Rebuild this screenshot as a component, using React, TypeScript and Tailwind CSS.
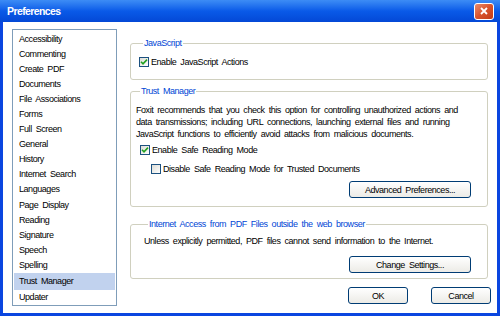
import React from "react";

const items = [
  "Accessibility",
  "Commenting",
  "Create PDF",
  "Documents",
  "File Associations",
  "Forms",
  "Full Screen",
  "General",
  "History",
  "Internet Search",
  "Languages",
  "Page Display",
  "Reading",
  "Signature",
  "Speech",
  "Spelling",
  "Trust Manager",
  "Updater",
];

function Check({ checked }: { checked?: boolean }) {
  return (
    <span className="w-[10px] h-[10px] shrink-0 border border-[#1c5180] bg-gradient-to-br from-[#dcdcd6] to-white flex items-center justify-center">
      {checked && (
        <svg width="8" height="8" viewBox="0 0 8 8">
          <path d="M1 3.8 L3 5.8 L7 1.6" fill="none" stroke="#21a121" strokeWidth="1.6" />
        </svg>
      )}
    </span>
  );
}

function XpButton({ label, className }: { label: string; className: string }) {
  return (
    <button
      className={`h-[17px] rounded-[3px] border border-[#003c74] bg-gradient-to-b from-white to-[#ecebe6] text-[9px] tracking-[-0.45px] [word-spacing:2px] text-black flex items-center justify-center ${className}`}
    >
      {label}
    </button>
  );
}

export default function App() {
  return (
    <div
      className="w-[500px] h-[316px] bg-[#0a46e0] flex flex-col overflow-hidden text-[9px] leading-[12px] tracking-[-0.45px] [word-spacing:2px] text-black"
      style={{ fontFamily: "Tahoma, 'Liberation Sans', Arial, sans-serif" }}
    >
      {/* title bar */}
      <div className="h-[22px] shrink-0 bg-gradient-to-b from-[#3d8cf5] via-[#0a5ae8] to-[#0448d6] flex items-center justify-between pl-[7px] pr-[6px]">
        <span className="text-white font-bold text-[10.5px] tracking-[-0.6px]">Preferences</span>
        <span className="w-[20px] h-[17px] rounded-[3px] border border-white bg-gradient-to-br from-[#e88a6a] via-[#d8532c] to-[#c23a14] flex items-center justify-center">
          <svg width="10" height="10" viewBox="0 0 10 10">
            <path d="M2 2 L8 8 M8 2 L2 8" stroke="white" strokeWidth="1.8" />
          </svg>
        </span>
      </div>

      {/* body */}
      <div className="flex-1 mx-[3px] mb-[3px] bg-white flex pl-[9px] pt-[7px]">
        {/* category list */}
        <div className="w-[105px] h-[277px] border border-[#7f9db9] pt-[1px] px-[1px]">
          <ul className="flex flex-col">
            {items.map((it) => (
              <li
                key={it}
                className={`h-[15.1px] flex items-center pl-[5px] ${
                  it === "Trust Manager" ? "bg-[#c1d2ee] h-[17px]" : ""
                }`}
              >
                {it}
              </li>
            ))}
          </ul>
        </div>

        {/* settings */}
        <div className="w-[358px] ml-[13px] mt-[8px] flex flex-col">
          <fieldset className="border border-[#d0d0bf] rounded-[3px] pl-[8px] pr-[8px] pt-[7px] pb-[11px]">
            <legend className="ml-[4px] px-[1px] text-[#0046d5]">JavaScript</legend>
            <label className="flex items-center gap-[2px]">
              <Check checked />
              <span>Enable JavaScript Actions</span>
            </label>
          </fieldset>

          <fieldset className="mt-[5px] border border-[#d0d0bf] rounded-[3px] pl-[5px] pr-[16px] pt-[7px] pb-[8px]">
            <legend className="ml-[4px] px-[1px] text-[#0046d5]">Trust Manager</legend>
            <p>
              Foxit recommends that you check this option for controlling unauthorized actions and
              data transmissions; including URL connections, launching external files and running
              JavaScript functions to efficiently avoid attacks from malicious documents.
            </p>
            <label className="mt-[4px] ml-[4px] flex items-center gap-[2px]">
              <Check checked />
              <span>Enable Safe Reading Mode</span>
            </label>
            <label className="mt-[7px] ml-[15px] flex items-center gap-[2px]">
              <Check />
              <span>Disable Safe Reading Mode for Trusted Documents</span>
            </label>
            <div className="mt-[6px] flex justify-end">
              <XpButton label="Advanced Preferences..." className="w-[122px]" />
            </div>
          </fieldset>

          <fieldset className="mt-[11px] border border-[#d0d0bf] rounded-[3px] pl-[13px] pr-[16px] pt-[5px] pb-[5px]">
            <legend className="ml-[4px] px-[1px] text-[#0046d5]">
              Internet Access from PDF Files outside the web browser
            </legend>
            <p>Unless explicitly permitted, PDF files cannot send information to the Internet.</p>
            <div className="mt-[9px] flex justify-end">
              <XpButton label="Change Settings..." className="w-[122px]" />
            </div>
          </fieldset>

          <div className="mt-[8px] flex justify-end gap-[23px] -mr-[3px]">
            <XpButton label="OK" className="w-[60px]" />
            <XpButton label="Cancel" className="w-[60px]" />
          </div>
        </div>
      </div>
    </div>
  );
}
